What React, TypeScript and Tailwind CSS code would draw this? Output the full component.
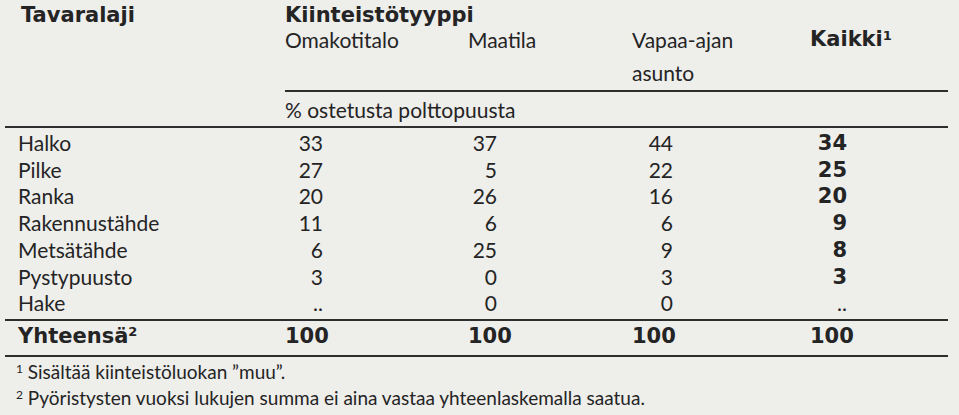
const rows: [string, string, string, string, string][] = [
  ["Halko", "33", "37", "44", "34"],
  ["Pilke", "27", "5", "22", "25"],
  ["Ranka", "20", "26", "16", "20"],
  ["Rakennustähde", "11", "6", "6", "9"],
  ["Metsätähde", "6", "25", "9", "8"],
  ["Pystypuusto", "3", "0", "3", "3"],
  ["Hake", "..", "0", "0", ".."],
];

const regular = { fontFamily: "Lato, 'Open Sans', sans-serif" };
const heavy = { fontFamily: "'DejaVu Sans', Verdana, sans-serif" };

const cols = "grid grid-cols-[280px_183px_164px_178px_138px]";

// right edges of the number columns, measured from each column's left side
function Nums({ values, bold }: { values: string[]; bold?: boolean }) {
  const pads = ["pr-[145px]", "pr-[135px]", "pr-[137px]", "pr-[101px]"];
  return (
    <>
      {values.map((v, i) => {
        const b = (bold || i === 3) && v !== "..";
        return (
          <div
            key={i}
            className={`${pads[i]} whitespace-nowrap text-right ${b ? "font-bold" : ""}`}
            style={b ? heavy : undefined}
          >
            {v}
          </div>
        );
      })}
    </>
  );
}

export default function App() {
  return (
    <div
      className="h-[415px] w-[959px] overflow-hidden bg-[#eeeeeb] text-[21px] text-[#242424]"
      style={regular}
    >
      <div className="ml-[5px] w-[943px] pt-[5px]">
        {/* header */}
        <div className="grid grid-cols-[280px_663px] font-bold leading-[21px]" style={heavy}>
          <div className="pl-[16px]">Tavaralaji</div>
          <div>Kiinteistötyyppi</div>
        </div>
        <div className={`${cols} -mt-[3px] mb-[1px] leading-[33px]`}>
          <div />
          <div>Omakotitalo</div>
          <div>Maatila</div>
          <div>
            Vapaa-ajan
            <br />
            asunto
          </div>
          <div className="font-bold" style={heavy}>
            Kaikki<sup className="text-[13px]">1</sup>
          </div>
        </div>
        <div className="ml-[280px] border-t-2 border-[#2e2e2e] pt-[4px] pb-[2px] leading-[28px]">
          % ostetusta polttopuusta
        </div>

        {/* body */}
        <div className="border-t-2 border-[#2e2e2e] pt-[2px] pb-[2px]">
          {rows.map(([label, ...vals]) => (
            <div key={label} className={`${cols} leading-[26.7px]`}>
              <div className="pl-[13px]">{label}</div>
              <Nums values={vals} />
            </div>
          ))}
        </div>

        <div className={`${cols} border-y-2 border-[#2e2e2e] pt-[1px] pb-[5px] leading-[28px]`}>
          <div className="pl-[13px] font-bold" style={heavy}>
            Yhteensä<sup className="text-[13px]">2</sup>
          </div>
          <Nums values={["100", "100", "100", "100"]} bold />
        </div>

        {/* footnotes */}
        <div className="pl-[11px] pt-[2px] text-[19px] leading-[26px]">
          <div>
            <sup className="text-[12px]">1</sup> Sisältää kiinteistöluokan ”muu”.
          </div>
          <div>
            <sup className="text-[12px]">2</sup> Pyöristysten vuoksi lukujen summa ei aina vastaa
            yhteenlaskemalla saatua.
          </div>
        </div>
      </div>
    </div>
  );
}
